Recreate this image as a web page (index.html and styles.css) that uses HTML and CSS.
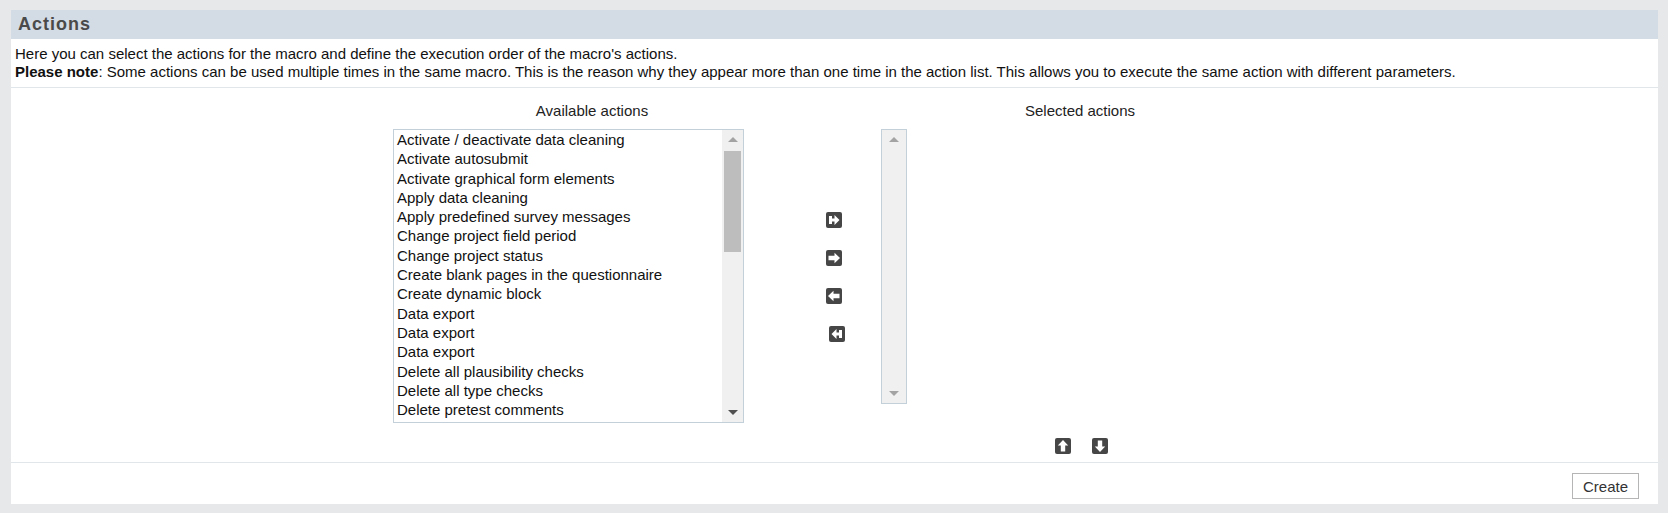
FILE: index.html
```html
<!DOCTYPE html>
<html lang="en">
<head>
<meta charset="utf-8">
<title>Actions</title>
<link rel="stylesheet" href="styles.css">
</head>
<body>
<main class="panel">
  <h2 class="panel-title">Actions</h2>
  <div class="intro">
    <p>Here you can select the actions for the macro and define the execution order of the macro's actions.</p>
    <p><strong>Please note</strong>: Some actions can be used multiple times in the same macro. This is the reason why they appear more than one time in the action list. This allows you to execute the same action with different parameters.</p>
  </div>
  <section class="picker">
    <div class="picker-grid">
      <div class="column">
        <div class="column-title">Available actions</div>
        <div class="listbox listbox-available">
          <ul class="options">
            <li>Activate / deactivate data cleaning</li>
            <li>Activate autosubmit</li>
            <li>Activate graphical form elements</li>
            <li>Apply data cleaning</li>
            <li>Apply predefined survey messages</li>
            <li>Change project field period</li>
            <li>Change project status</li>
            <li>Create blank pages in the questionnaire</li>
            <li>Create dynamic block</li>
            <li>Data export</li>
            <li>Data export</li>
            <li>Data export</li>
            <li>Delete all plausibility checks</li>
            <li>Delete all type checks</li>
            <li>Delete pretest comments</li>
          </ul>
          <div class="scrollbar">
            <span class="arrow arrow-up"></span>
            <span class="track"><span class="thumb"></span></span>
            <span class="arrow arrow-down arrow-dark"></span>
          </div>
        </div>
      </div>
      <div class="moves">
        <svg class="icon" viewBox="0 0 16 16"><rect width="16" height="16" rx="2" fill="#464646"/><path d="M3 4h3v2.500h2.500V3l5 5-5 5V9.500H6V12H3z" fill="#fff"/></svg>
        <svg class="icon" viewBox="0 0 16 16"><rect width="16" height="16" rx="2" fill="#464646"/><path d="M2.500 5.800H8.500V2.800L14 8l-5.500 5.200v-3h-6z" fill="#fff"/></svg>
        <svg class="icon" viewBox="0 0 16 16"><rect width="16" height="16" rx="2" fill="#464646"/><path d="M13.500 5.800H7.500V2.800L2 8l5.500 5.200v-3h6z" fill="#fff"/></svg>
        <svg class="icon icon-offset" viewBox="0 0 16 16"><rect width="16" height="16" rx="2" fill="#464646"/><path d="M13 4h-3v2.500H7.500V3l-5 5 5 5V9.500H10V12h3z" fill="#fff"/></svg>
      </div>
      <div class="column">
        <div class="column-title">Selected actions</div>
        <div class="listbox listbox-selected">
          <div class="scrollbar scrollbar-empty">
            <span class="arrow arrow-up"></span>
            <span class="track"></span>
            <span class="arrow arrow-down"></span>
          </div>
        </div>
        <div class="order">
          <svg class="icon" viewBox="0 0 16 16"><rect width="16" height="16" rx="2" fill="#464646"/><path d="M5.800 13.500V7.500H2.800L8 2l5.200 5.500h-3v6z" fill="#fff"/></svg>
          <svg class="icon" viewBox="0 0 16 16"><rect width="16" height="16" rx="2" fill="#464646"/><path d="M5.800 2.500V8.500H2.800L8 14l5.200-5.500h-3v-6z" fill="#fff"/></svg>
        </div>
      </div>
    </div>
  </section>
  <footer class="panel-footer">
    <button class="create-button" type="button">Create</button>
  </footer>
</main>
</body>
</html>
```
FILE: styles.css
```css
* { box-sizing: border-box; }
html, body { height: 100%; }
body {
  margin: 0;
  padding: 10px 10px 9px 11px;
  background: #e6e8e9;
  font-family: "Liberation Sans", Arial, sans-serif;
  font-size: 15px;
  color: #111;
  overflow: hidden;
}
.panel {
  height: 494px;
  background: #fff;
  display: flex;
  flex-direction: column;
}
.panel-title {
  margin: 0;
  height: 29px;
  padding: 0 7px;
  background: #d3dce4;
  color: #4a4a4a;
  font-size: 18px;
  font-weight: bold;
  letter-spacing: 1px;
  line-height: 29px;
}
.intro {
  height: 49px;
  padding: 6px 4px 0;
  border-bottom: 1px solid #e1e6ea;
  line-height: 18px;
}
.intro p { margin: 0; }
.picker {
  flex: 1;
  display: flex;
  justify-content: center;
}
.picker-grid {
  display: grid;
  grid-template-columns: 398px 90px 398px;
  margin-left: 3px;
}
.column-title {
  height: 41px;
  padding-top: 15px;
  text-align: center;
  line-height: 16px;
  color: #222;
}
.listbox {
  display: flex;
  justify-content: space-between;
  border: 1px solid #c3d0da;
  background: #fff;
}
.listbox-available { width: 351px; height: 294px; }
.listbox-selected { width: 26px; height: 275px; }
.options {
  list-style: none;
  margin: 0;
  padding: 0 0 0 3px;
  overflow: hidden;
}
.options li {
  height: 19.3px;
  line-height: 19px;
  white-space: nowrap;
}
.scrollbar {
  width: 21px;
  display: flex;
  flex-direction: column;
  align-items: center;
  background: #f0f0f0;
}
.scrollbar-empty { width: 24px; }
.arrow {
  flex: none;
  width: 100%;
  height: 19px;
  display: flex;
  align-items: center;
  justify-content: center;
}
.arrow::before {
  content: "";
  border-left: 5px solid transparent;
  border-right: 5px solid transparent;
}
.arrow-up::before { border-bottom: 5px solid #a3a3a3; }
.arrow-down::before { border-top: 5px solid #a3a3a3; }
.arrow-dark::before { border-top-color: #505050; }
.track {
  flex: 1;
  width: 100%;
  padding: 2px 2px 0;
}
.thumb {
  display: block;
  height: 101px;
  background: #bdbdbd;
}
.moves {
  display: flex;
  flex-direction: column;
  align-items: flex-start;
  gap: 22px;
  padding: 124px 0 0 35px;
}
.icon {
  display: block;
  width: 16px;
  height: 16px;
  flex: none;
}
.icon-offset { margin-left: 3px; }
.order {
  display: flex;
  gap: 21px;
  margin-top: 34px;
  padding-left: 174px;
}
.panel-footer {
  height: 42px;
  padding: 10px 19px 0 0;
  border-top: 1px solid #e1e6ea;
  display: flex;
  justify-content: flex-end;
  align-items: flex-start;
}
.create-button {
  width: 67px;
  height: 26px;
  padding: 0;
  border: 1px solid #b5b5b5;
  background: #fff;
  color: #333;
  font-family: inherit;
  font-size: 15px;
}
```
